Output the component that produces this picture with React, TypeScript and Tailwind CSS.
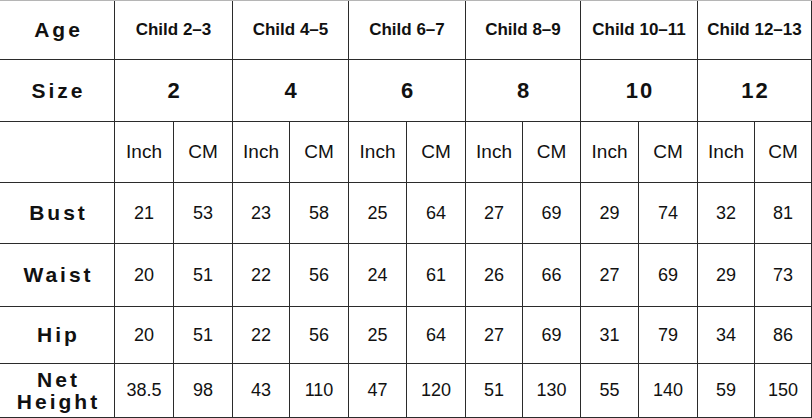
import React from 'react';

const ages = ['Child 2–3', 'Child 4–5', 'Child 6–7', 'Child 8–9', 'Child 10–11', 'Child 12–13'];
const sizes = ['2', '4', '6', '8', '10', '12'];

const rows: { label: string[]; values: string[] }[] = [
  { label: ['Bust'], values: ['21', '53', '23', '58', '25', '64', '27', '69', '29', '74', '32', '81'] },
  { label: ['Waist'], values: ['20', '51', '22', '56', '24', '61', '26', '66', '27', '69', '29', '73'] },
  { label: ['Hip'], values: ['20', '51', '22', '56', '25', '64', '27', '69', '31', '79', '34', '86'] },
  { label: ['Net', 'Height'], values: ['38.5', '98', '43', '110', '47', '120', '51', '130', '55', '140', '59', '150'] },
];

const font = { fontFamily: '"Liberation Sans", Arial, sans-serif' };

export default function App() {
  return (
    <div className="w-[812px] h-[418px] bg-white" style={font}>
      <div className="grid grid-cols-[114px_58px_58px_56px_58px_57px_58px_56px_57px_57px_58px_56px_56px] grid-rows-[58px_61px_60px_60px_62px_56px_53px] gap-px bg-[#2b2b2b] pr-px pb-px border-t border-[#b5b5b5] text-[#111]">
        {/* Age row */}
        <div className="bg-white flex items-center justify-center text-[21px] font-bold tracking-[3px] pl-[3px]">Age</div>
        {ages.map((a) => (
          <div key={a} className="col-span-2 bg-white flex items-center justify-center text-[17px] font-bold">
            {a}
          </div>
        ))}

        {/* Size row */}
        <div className="bg-white flex items-center justify-center text-[21px] font-bold tracking-[3px] pl-[3px]">Size</div>
        {sizes.map((s) => (
          <div key={s} className="col-span-2 bg-white flex items-center justify-center text-[22px] font-bold tracking-[2px] pl-[2px]">
            {s}
          </div>
        ))}

        {/* Units row */}
        <div className="bg-white" />
        {sizes.map((s) => (
          <React.Fragment key={'u' + s}>
            <div className="bg-white flex items-center justify-center text-[19px]">Inch</div>
            <div className="bg-white flex items-center justify-center text-[19px]">CM</div>
          </React.Fragment>
        ))}

        {/* Measurements */}
        {rows.map((r) => (
          <React.Fragment key={r.label.join(' ')}>
            <div className="bg-white flex flex-col items-center justify-center text-[21px] font-bold tracking-[3px] pl-[3px] leading-[22px]">
              {r.label.map((l) => (
                <span key={l}>{l}</span>
              ))}
            </div>
            {r.values.map((v, i) => (
              <div key={i} className="bg-white flex items-center justify-center text-[18px]">
                {v}
              </div>
            ))}
          </React.Fragment>
        ))}
      </div>
    </div>
  );
}
